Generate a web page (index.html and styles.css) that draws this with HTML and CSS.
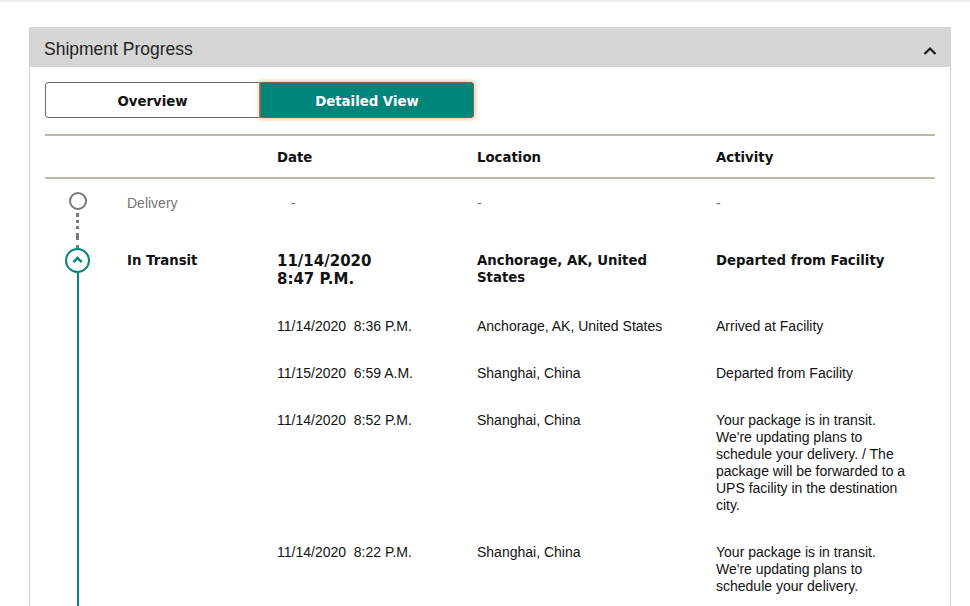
FILE: index.html
```html
<!DOCTYPE html>
<html lang="en">

<head>
    <meta charset="UTF-8">
    <meta name="viewport" content="width=device-width, initial-scale=1.0">
    <title>Shipment Progress</title>
    <link rel="stylesheet" href="styles.css">
</head>

<body>
    <div class="topbar"></div>

    <div class="card">
        <div class="card-head">
            <span class="card-title">Shipment Progress</span>
            <svg class="head-chevron" width="14" height="9" viewBox="0 0 14 9">
                <path d="M1.5 8 L7 2.5 L12.5 8" fill="none" stroke="#1a1a1a" stroke-width="2.2" />
            </svg>
        </div>

        <div class="card-body">
            <div class="toggle">
                <button class="toggle-btn">Overview</button>
                <button class="toggle-btn active">Detailed View</button>
            </div>

            <div class="progress">
                <div class="row head">
                    <div class="tl"></div>
                    <div class="cell"></div>
                    <div class="cell">Date</div>
                    <div class="cell">Location</div>
                    <div class="cell">Activity</div>
                </div>

                <!-- upcoming milestone -->
                <div class="row pending">
                    <div class="tl">
                        <div class="tl-gap"></div>
                        <div class="dot-empty"></div>
                        <div class="line-dotted"></div>
                    </div>
                    <div class="cell status">Delivery</div>
                    <div class="cell dash first">-</div>
                    <div class="cell dash">-</div>
                    <div class="cell dash">-</div>
                </div>

                <!-- current milestone -->
                <div class="row current">
                    <div class="tl">
                        <div class="line-dotted short"></div>
                        <svg class="dot-current" width="25" height="25" viewBox="0 0 25 25">
                            <circle cx="12.5" cy="12.5" r="11.5" fill="#fff" stroke="#00857a" stroke-width="2" />
                            <path d="M8.3 14.2 L12.5 10 L16.7 14.2" fill="none" stroke="#00857a" stroke-width="2.4" />
                        </svg>
                        <div class="line-solid"></div>
                    </div>
                    <div class="cell status">In Transit</div>
                    <div class="cell big-date"><span>11/14/2020</span><span>8:47 P.M.</span></div>
                    <div class="cell">Anchorage, AK, United States</div>
                    <div class="cell">Departed from Facility</div>
                </div>

                <div class="row">
                    <div class="tl"><div class="line-solid"></div></div>
                    <div class="cell"></div>
                    <div class="cell">11/14/2020&nbsp; 8:36 P.M.</div>
                    <div class="cell">Anchorage, AK, United States</div>
                    <div class="cell">Arrived at Facility</div>
                </div>

                <div class="row">
                    <div class="tl"><div class="line-solid"></div></div>
                    <div class="cell"></div>
                    <div class="cell">11/15/2020&nbsp; 6:59 A.M.</div>
                    <div class="cell">Shanghai, China</div>
                    <div class="cell">Departed from Facility</div>
                </div>

                <div class="row">
                    <div class="tl"><div class="line-solid"></div></div>
                    <div class="cell"></div>
                    <div class="cell">11/14/2020&nbsp; 8:52 P.M.</div>
                    <div class="cell">Shanghai, China</div>
                    <div class="cell">Your package is in transit. We're updating plans to schedule your delivery. / The package will be forwarded to a UPS facility in the destination city.</div>
                </div>

                <div class="row">
                    <div class="tl"><div class="line-solid"></div></div>
                    <div class="cell"></div>
                    <div class="cell">11/14/2020&nbsp; 8:22 P.M.</div>
                    <div class="cell">Shanghai, China</div>
                    <div class="cell">Your package is in transit. We're updating plans to schedule your delivery.</div>
                </div>
            </div>
        </div>
    </div>
</body>

</html>
```

FILE: styles.css
```css
* {
    margin: 0;
    padding: 0;
    box-sizing: border-box;
}

body {
    font-family: "Liberation Sans", Arial, sans-serif;
    font-size: 14px;
    line-height: 17px;
    color: #121212;
    background: #fff;
}

.topbar {
    height: 2px;
    background: #eeeeee;
}

.card {
    width: 922px;
    margin: 25px 0 0 29px;
    border: 1px solid #d4d4d4;
    border-top: none;
}

.card-head {
    height: 40px;
    background: #d6d6d6;
    display: flex;
    align-items: center;
    justify-content: space-between;
    padding: 0 14px 0 15px;
    margin: 0 -1px;
}

.card-title {
    font-size: 17.5px;
    color: #242424;
    padding-top: 4px;
}

.head-chevron {
    display: block;
    margin-top: 6px;
}

.card-body {
    padding: 15px 15px 0 15px;
}

/* view switch */
.toggle {
    display: flex;
    width: 429px;
    height: 36px;
}

.toggle-btn {
    flex: 1;
    border: 1px solid #6b6b6b;
    background: #fff;
    color: #121212;
    font-family: "DejaVu Sans", Verdana, sans-serif;
    font-weight: bold;
    font-size: 13.3px;
    padding-top: 2px;
    border-radius: 3px 0 0 3px;
}

.toggle-btn.active {
    flex: 0 0 214px;
    background: #00857a;
    color: #fff;
    border-color: #7c6650;
    border-radius: 0 3px 3px 0;
    box-shadow: 0 0 4px 1px rgba(240, 160, 100, .7);
}

/* timeline table */
.progress {
    margin-top: 16px;
    border-top: 2px solid #bfb5ab;
}

.row {
    display: grid;
    grid-template-columns: 64px 168px 200px 239px 1fr;
}

.row .cell {
    padding: 15px 0;
}

.row .cell:nth-child(2) {
    padding-left: 18px;
}

.row .cell:nth-child(4) {
    padding-right: 36px;
}

.row .cell:nth-child(5) {
    padding-right: 24px;
}

.row.head {
    border-bottom: 2px solid #bfb5ab;
}

.row.head .cell {
    padding: 13px 0 11px;
    font-family: "DejaVu Sans", Verdana, sans-serif;
    font-weight: bold;
    font-size: 13.3px;
}

.row.pending .cell {
    padding: 16px 0 25px;
}

.row.pending .cell.status {
    padding-left: 18px;
    color: #757575;
}

.dash {
    color: #757575;
}

.dash.first {
    padding-left: 14px !important;
}

.row.current .cell {
    font-family: "DejaVu Sans", Verdana, sans-serif;
    font-weight: bold;
    font-size: 13.3px;
}

.row.current .big-date {
    font-size: 15px;
    line-height: 18px;
}

.big-date span {
    display: block;
}

/* left rail */
.tl {
    display: flex;
    flex-direction: column;
    align-items: center;
    padding-left: 1px;
}

.tl-gap {
    height: 13px;
}

.dot-empty {
    width: 18px;
    height: 18px;
    border: 2px solid #777;
    border-radius: 50%;
}

.line-dotted {
    flex: 1;
    width: 0;
    border-left: 3px dotted #777;
    margin-top: 3px;
}

.line-dotted.short {
    flex: 0 0 11px;
    margin-top: 0;
}

.dot-current {
    display: block;
    flex: none;
}

.line-solid {
    flex: 1;
    width: 2px;
    background: #00857a;
}
```
